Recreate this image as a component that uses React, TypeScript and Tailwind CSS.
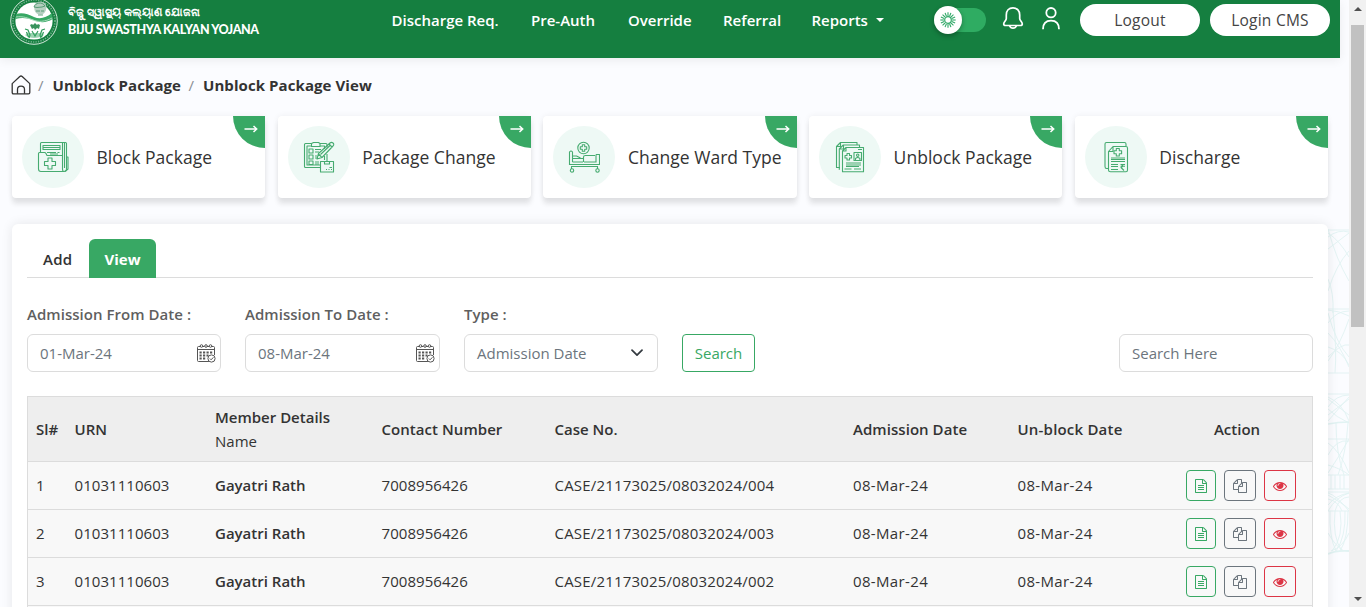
import React from "react";

function Logo() {
  return (
    <svg width="48" height="48" viewBox="0 0 48 48" className="shrink-0">
      <circle cx="24" cy="24" r="23.3" fill="none" stroke="#fff" strokeWidth="1" opacity=".8" />
      <circle cx="24" cy="24" r="21" fill="none" stroke="#fff" strokeWidth="1.6" strokeDasharray="1.2 1.3" opacity=".4" />
      <circle cx="24" cy="24" r="18.6" fill="#fff" />
      <path d="M24 9c1-5 10-6 12-1 1 3 0 7-3 9-4 1.500-8-.5-8.500-4z" fill="#b5cfc0" />
      <path d="M24 10c1-4 8-6 11-1l-3 1-5 .5zM26 14h4M31 14h3M28 18h5" stroke="#3f8f62" strokeWidth=".8" fill="none" />
      <path d="M6 17c6-2 12 0 18 3 6 2.500 12 1 18-4l.6 6c-6 4-13 4-19 1-6-2-12-3-18-1z" fill="#38a864" />
      <path d="M6 20c7-1 12 1 17 3s12 2 19-2" stroke="#a9dcbd" strokeWidth="1" fill="none" />
      <path d="M15 32l3 1 2 5-1 3M35 32l-3 1-2 5 1 3M16.500 35l2 5M33.500 35l-2 5M22 34l3 5 3-5" stroke="#2f9a5a" strokeWidth="1.200" fill="none" />
      <path d="M20 28l2 4 2-1 1 2 2-2 2 1 1-4-2-1-1 1-2-2-2 2-1-1z" fill="#15803f" opacity=".85" />
      <path d="M15 38c4 4 14 4 19 0l-3-2h-13z" fill="#38a864" opacity=".5" />
    </svg>
  );
}

function Sun() {
  const rays = Array.from({ length: 16 }, (_, i) => i * 22.5);
  return (
    <svg width="16" height="16" viewBox="0 0 16 16" fill="none" stroke="#2fa866" strokeWidth="1.1">
      <circle cx="8" cy="8" r="3.300" strokeWidth="1.200" />
      {rays.map((a) => (
        <path key={a} d="M8 3.900V.3" transform={`rotate(${a} 8 8)`} />
      ))}
    </svg>
  );
}

function Bell() {
  return (
    <svg width="22" height="24" viewBox="0 0 22 24" fill="none" stroke="#fff" strokeWidth="1.700" strokeLinejoin="round">
      <path d="M11 1.900c-4.200 0-6.700 3-6.700 7v3.600c0 2.100-2.600 3.500-2.600 5.500 0 1 .8 1.500 1.900 1.500h14.800c1.100 0 1.900-.5 1.900-1.500 0-2-2.600-3.400-2.600-5.500V8.900c0-4-2.500-7-6.700-7z" />
      <path d="M7.600 19.800c.6 1.600 1.800 2.400 3.400 2.400s2.800-.8 3.400-2.400" />
    </svg>
  );
}

function Person() {
  return (
    <svg width="18" height="24" viewBox="0 0 18 24" fill="none" stroke="#fff" strokeWidth="1.800">
      <circle cx="9" cy="6.700" r="4.700" />
      <path d="M1 23.200c0-5.700 3.200-8.600 8-8.600s8 2.900 8 8.600" />
    </svg>
  );
}

function Home() {
  return (
    <svg width="20" height="20" viewBox="0 0 20 20" fill="none" stroke="#333" strokeWidth="1.300" strokeLinejoin="round">
      <path d="M1.200 8.600 8.800 1.500q1.200-1 2.400 0l7.600 7.100v8.900q0 1.300-1.300 1.300h-15q-1.300 0-1.300-1.300z" />
      <path d="M6.500 18.700v-4.200c0-4.600 7-4.600 7 0v4.200" />
    </svg>
  );
}

function CalendarIcon() {
  return (
    <svg width="19" height="19" viewBox="0 0 19 19" fill="none" stroke="#555" strokeWidth="1">
      <path d="M12 17.500H1.500q-1 0-1-1V3.500q0-1 1-1h2M5.500 2.500h2M10 2.500h2M14.500 2.500h2q1 0 1 1V11M.5 5.500h17" />
      <circle cx="4.500" cy="2" r="1.300" />
      <circle cx="9" cy="2" r="1.300" />
      <circle cx="13.500" cy="2" r="1.300" />
      <path d="M2.500 8.500h2.200M6 8.500h2.200M9.500 8.500h2.200M13 8.500h2.200M2.500 11.500h2.200M6 11.500h2.200M9.500 11.500h2M2.500 14.500h2.200M6 14.500h2.200" strokeWidth="2" />
      <circle cx="14.500" cy="14.500" r="3.600" fill="#fff" />
      <path d="m12.800 14.500 1.300 1.300 2.300-2.500" />
    </svg>
  );
}

function FileText() {
  return (
    <svg width="12" height="14" viewBox="128 0 1536 1792" fill="currentColor">
      <path d="M1596 380q28 28 48 76t20 88v1152q0 40-28 68t-68 28h-1344q-40 0-68-28t-28-68v-1600q0-40 28-68t68-28h896q40 0 88 20t76 48zm-444-244v376h376q-10-29-22-41l-313-313q-12-12-41-22zm384 1528v-1024h-416q-40 0-68-28t-28-68v-416h-768v1536h1280zm-1024-864q0-14 9-23t23-9h704q14 0 23 9t9 23v64q0 14-9 23t-23 9h-704q-14 0-23-9t-9-23v-64zm736 224q14 0 23 9t9 23v64q0 14-9 23t-23 9h-704q-14 0-23-9t-9-23v-64q0-14 9-23t23-9h704zm0 256q14 0 23 9t9 23v64q0 14-9 23t-23 9h-704q-14 0-23-9t-9-23v-64q0-14 9-23t23-9h704z" />
    </svg>
  );
}

function Files() {
  return (
    <svg width="14" height="14" viewBox="0 0 1792 1792" fill="currentColor">
      <path d="M1696 384q40 0 68 28t28 68v1216q0 40-28 68t-68 28h-960q-40 0-68-28t-28-68v-288h-544q-40 0-68-28t-28-68v-672q0-40 20-88t48-76l408-408q28-28 76-48t88-20h416q40 0 68 28t28 68v328q68-40 128-40h416zm-544 213l-299 299h299v-299zm-640-384l-299 299h299v-299zm196 647l316-316v-416h-384v416q0 40-28 68t-68 28h-416v640h512v-256q0-40 20-88t48-76zm956 804v-1152h-384v416q0 40-28 68t-68 28h-416v640h896z" />
    </svg>
  );
}

function Eye() {
  return (
    <svg width="14" height="14" viewBox="0 0 1792 1792" fill="currentColor">
      <path d="M1664 960q-152-236-381-353 61 104 61 225 0 185-131.500 316.500t-316.500 131.500-316.500-131.500-131.500-316.500q0-121 61-225-229 117-381 353 133 205 333.500 326.500t434.500 121.500 434.500-121.500 333.500-326.500zm-720-384q0-20-14-34t-34-14q-125 0-214.500 89.500t-89.500 214.500q0 20 14 34t34 14 34-14 14-34q0-86 61-147t147-61q20 0 34-14t14-34zm848 384q0 34-20 69-140 230-376.500 368.500t-499.500 138.500-499.500-139-376.500-368q-20-35-20-69t20-69q140-229 376.500-368t499.500-139 499.500 139 376.500 368q20 35 20 69z" />
    </svg>
  );
}

function CardSvg({ children }: { children: React.ReactNode }) {
  return (
    <svg width="32" height="32" viewBox="0 0 32 32" fill="none" stroke="#46ab70" strokeWidth="1.100" strokeLinejoin="round">
      {children}
    </svg>
  );
}

const cards = [
  {
    label: "Block Package",
    icon: (
      <CardSvg>
        <path d="M3.500 11V2.500q0-1 1-1h24q1 0 1 1V28q0 2-1.500 2.500" />
        <path d="M25.500 2v26q0 2.500 1.500 2.500t4-2.500V16h-1.500M27.500 2v25" />
        <path d="M1.500 12.500q0-1 1-1h5q1 0 1.500 1l1 2h15.500M1.500 12.500V28q0 2.500 2.500 2.500h23.500" />
        <path d="M6 4.500h17v4H6zM6.500 6.500h16M10 11.500h9M20.500 11.500h2M13 13h8" />
        <path d="M11 17h4v3.500h3.500v4H15V28h-4v-3.500H7.500v-4H11z" />
      </CardSvg>
    ),
  },
  {
    label: "Package Change",
    icon: (
      <CardSvg>
        <path d="M18 26.500H2.500q-1 0-1-1v-22q0-1 1-1h6M17 2.500h6q1 0 1 1v3M24 13v7" />
        <path d="M18 24H4V5h4.500M17 5h4.500v3M21.500 15v4" />
        <path d="M8.500 5.500v-3l2-1h5l1.500 1v3z" />
        <path d="M6 8h4v4H6zM6 14h4v4H6zM6 20h4v3.500H6zM12 8.500h6M12 11h4M12 15h2M12 17h3M12 21h4M12 23h4" />
        <path d="m14 18 1.500-5.500L27 2q1.500-1.300 3 0t0 3L19 16.500zM26 3l3 3M15.500 13l3 3M17.500 13.500 27 4.500" />
        <path d="M17.500 20.500h13v10.500h-13zM21.500 20.500V23h5v-2.500M23 28.500h1M25.500 28.500h1M28 28.500h1M26.500 26.500H29" />
      </CardSvg>
    ),
  },
  {
    label: "Change Ward Type",
    icon: (
      <CardSvg>
        <circle cx="15.500" cy="7" r="5.700" />
        <path d="M14.300 3.800h2.400v2h2v2.400h-2v2h-2.400v-2h-2V5.800h2z" />
        <path d="M1.500 24V11q1.500-2 3 0v10M4.500 15h4l4 2M4.500 17.500h11M4.500 21H15M15.500 21v-5q0-1.500 2-1.500h9.500M28 13.500h3.500V24M28 13.500v8M16 21h12" />
        <path d="M1.500 23.500h30M3 25.500h27M3.500 25.500V28M29.500 25.500V28" />
        <circle cx="4" cy="29.500" r="1.700" />
        <circle cx="29.500" cy="29.500" r="1.700" />
      </CardSvg>
    ),
  },
  {
    label: "Unblock Package",
    icon: (
      <CardSvg>
        <path d="M6 26.500H2.500V5.500l4-4H23v3M2.500 5.500h4v-4M5.500 28.500H5.300V8l4-4H25.500v3M8.500 30.800V10l3.500-3.500h17.500v24.300zM5.500 8h4V4M8.500 10H12V6.500" />
        <path d="M13 12.500h2.500v2h2V17h-2v2H13v-2h-2v-2.500h2zM20 11.500h7.500v8H20z" />
        <circle cx="23.700" cy="14.200" r="1.200" />
        <path d="M21.500 19v-1.500q2.200-2 4.400 0V19M24 8.500h4M12 22h15M12 24h15M12 25.500h13M10.500 28h7M20 28h7" />
      </CardSvg>
    ),
  },
  {
    label: "Discharge",
    icon: (
      <CardSvg>
        <path d="M8 27.500H6.500q-1.500 0-1.500-2V3q0-1.500 1.500-1.500h18Q26 1.500 26 3v2" />
        <path d="M8.500 10.500 13 5.500h13q1.500 0 1.500 1.500v22q0 1.800-1.500 1.800H10.500q-2 0-2-1.800zM8.500 10.500H13v-5" />
        <path d="M16.300 7.500h3v2.300h2.300v3h-2.300V15h-3v-2.200H14v-3h2.300z" />
        <path d="M11 17h14M11 18.500h14M11 20.500h14M11 23.500h7M11 25.500h7M11 28.500h7M20.500 23.500h4.500M20.500 25.300h4.500M21 23.500q4 1.500 0 3l3 3" />
      </CardSvg>
    ),
  },
];

const nav = [
  { label: "Discharge Req.", cls: "w-[139.500px]" },
  { label: "Pre-Auth", cls: "w-[97px]" },
  { label: "Override", cls: "w-[95px]" },
  { label: "Referral", cls: "w-[88.500px]" },
];

const rows = [
  { sl: "1", no: "004" },
  { sl: "2", no: "003" },
  { sl: "3", no: "002" },
];

const COLS = "grid grid-cols-[38.500px_140.500px_166.500px_173px_298.500px_164.500px_auto]";

function Guilloche() {
  return (
    <svg width="21" height="326" viewBox="0 0 21 326" className="absolute left-[1328px] top-[229px]" fill="none" stroke="#7fd0c4" strokeWidth=".9" opacity=".2">
      <path d="M0 1h21M0 8Q10 0 21 3M0 20 21 4M0 0q8 30 21 52M0 62Q8 36 21 22M0 50q6 14 5 34M0 4q12 8 21 24" />
      <path d="M0 80h21M0 81q12 1 21 6M0 94q8-12 21-12M0 84q8 30 21 44M0 132q12-16 21-42M0 104q12 12 21 34M0 118q14 4 21 18M5 82q4 40 2 62M0 128q14-14 21-12M0 144h21" />
      <path d="M0 165h21M0 168q14 6 21 24M0 192q12-14 21-24M0 178q8-12 21-12M0 180q8 8 21 14M0 170l21 16M0 186l21-16" />
      <path d="M0 195q10-2 21-2" strokeWidth="1.400" />
      <path d="M0 210h21M0 214q12 8 21 30M0 244q12-18 21-34M8 194q0 30 8 52M0 226q8-16 21-14M0 236q14 4 21 10M20 194q-2 30-10 52" />
      <path d="M0 246h21M3 246v14M7 246v14M12 246v14M16 246v14M0 260h21M0 263h21" />
      <path d="M0 264q8 2 21 18M0 282q8-14 21-18M0 270q10 2 14 12M7 282q4-14 14-14M0 276q8-10 21-12M0 266q14 8 21 14M0 282h21" />
      <path d="M2 282q-1 26 6 40M7 282q-3 26 7 40M12 282q4 26-8 40M17 282q1 26-9 40M20 282q0 28-8 40M0 304q8 14 16 18M21 304q-6 14-18 18" />
      <path d="M0 325q8-4 21-3" strokeWidth="1.800" />
    </svg>
  );
}

function Field({ label, value, width, children }: { label: string; value: string; width: string; children: React.ReactNode }) {
  return (
    <div className={`${width} mr-6`}>
      <div className="h-6 whitespace-nowrap font-semibold leading-6 tracking-[0.04px] text-[#5f5f5f]">{label}</div>
      <div className="mt-2 flex h-[38px] items-center justify-between rounded-md border border-[#dcdcdc] bg-white pl-3 text-[#6c757d]">
        <span>{value}</span>
        {children}
      </div>
    </div>
  );
}

export default function App() {
  return (
    <div className="relative flex h-[607px] w-[1366px] overflow-hidden bg-[#fbfcff] font-['Open_Sans','Noto_Sans',sans-serif] text-[15px] leading-6 text-[#333]">
      <Guilloche />
      <div className="relative w-[1349px] shrink-0">
        <header className="flex h-[58px] w-[1340px] items-start bg-[#157f40] text-white shadow-[0_2px_10px_rgba(0,0,0,0.07)]">
          <div className="-mt-[3px] flex w-[391.500px] pl-[10px]">
            <Logo />
            <div className="ml-[10px] whitespace-nowrap pt-[6px]">
              <div className="h-[18px] text-[11.300px] font-semibold leading-[18px]">ବିଜୁ ସ୍ୱାସ୍ଥ୍ୟ କଲ୍ୟାଣ ଯୋଜନା</div>
              <div className="font-['Lato',sans-serif] text-[12.500px] font-black leading-[18px] tracking-[-0.400px]">BIJU SWASTHYA KALYAN YOJANA</div>
            </div>
          </div>
          <nav className="flex w-[542.500px] whitespace-nowrap pt-2 font-semibold">
            {nav.map((n) => (
              <a key={n.label} className={n.cls}>{n.label}</a>
            ))}
            <a className="flex items-center">
              <span className="w-[64px]">Reports</span>
              <span className="border-x-4 border-t-4 border-x-transparent border-t-white" />
            </a>
          </nav>
          <div className="mt-2 flex h-6 w-[52px] items-center rounded-full bg-[#2fac62]">
            <span className="flex size-[28px] items-center justify-center rounded-full bg-white shadow-[0_2px_5px_rgba(0,0,0,0.3)]">
              <Sun />
            </span>
          </div>
          <div className="ml-4 mt-[6px]"><Bell /></div>
          <div className="ml-[18px] mt-[6px]"><Person /></div>
          <button className="ml-5 mt-1 h-8 w-[120px] rounded-full bg-white text-[15.500px] font-medium tracking-[0.250px] text-[#444]">Logout</button>
          <button className="ml-[10px] mt-1 h-8 w-[120px] rounded-full bg-white text-[15.500px] font-medium tracking-[0.250px] text-[#444]">Login CMS</button>
        </header>

        <div className="flex h-[58px] items-center whitespace-nowrap pb-[4px] pl-[11px] font-bold tracking-[0.080px]">
          <Home />
          <span className="ml-[7px] w-[14.500px] font-normal text-[#8a8f94]">/</span>
          <span className="w-[136px]">Unblock Package</span>
          <span className="w-[14.500px] font-normal text-[#8a8f94]">/</span>
          <span>Unblock Package View</span>
        </div>

        <div className="ml-3 grid w-[1316px] grid-cols-5 gap-x-[12.500px]">
          {cards.map((c) => (
            <div key={c.label} className="relative flex h-[82px] items-center rounded bg-white pl-[10px] shadow-[0_6px_5px_rgba(0,0,0,0.09),0_0_6px_rgba(0,0,0,0.06)]">
              <div className="flex size-[62px] shrink-0 items-center justify-center rounded-full bg-[#eef9f5]">{c.icon}</div>
              <div className="ml-[12.500px] whitespace-nowrap text-[17.500px] font-medium tracking-[0.030px]">{c.label}</div>
              <div className="absolute right-0 top-0 flex size-8 items-start justify-end rounded-bl-full rounded-tr bg-[#38a864] pr-[7px] pt-[8px]">
                <svg width="14" height="10" viewBox="0 0 14 10" fill="none" stroke="#fff" strokeWidth="1.500">
                  <path d="M.5 5h12M9.500 2l3.200 3-3.200 3" />
                </svg>
              </div>
            </div>
          ))}
        </div>

        <main className="ml-3 mt-[26px] h-[420px] w-[1316px] rounded-md bg-white px-[15px] pt-[15px] shadow-[0_0_12px_rgba(0,0,0,0.09)]">
          <div className="flex h-[39px] border-b border-[#dcdcdc] font-semibold">
            <div className="w-[62px] pl-4 pt-2 tracking-[0.300px]">Add</div>
            <div className="h-[39px] w-[67px] rounded-t-md bg-[#38a864] pt-2 text-center font-bold text-white">View</div>
          </div>

          <div className="mt-6 flex items-end">
            <Field label="Admission From Date :" value="01-Mar-24" width="w-[194px]">
              <span className="mr-1"><CalendarIcon /></span>
            </Field>
            <Field label="Admission To Date :" value="08-Mar-24" width="w-[195px]">
              <span className="mr-1"><CalendarIcon /></span>
            </Field>
            <Field label="Type :" value="Admission Date" width="w-[194px]">
              <svg width="12" height="8" viewBox="0 0 12 8" fill="none" stroke="#343a40" strokeWidth="1.700" strokeLinecap="round" strokeLinejoin="round" className="mr-[14px]">
                <path d="m1 1.200 5 5 5-5" />
              </svg>
            </Field>
            <button className="h-[38px] w-[73px] rounded border border-[#38a864] text-[#38a864]">Search</button>
            <div className="ml-auto flex h-[38px] w-[194px] items-center rounded-md border border-[#dcdcdc] pl-3 text-[#6c757d]">Search Here</div>
          </div>

          <div className="mt-6 h-[220px] whitespace-nowrap border border-b-0 border-[#dcdcdc] bg-[#f8f8f8]">
            <div className={`${COLS} h-[65px] items-center border-b border-[#dcdcdc] bg-[#eee] pl-2 font-semibold`}>
              <div>Sl#</div>
              <div>URN</div>
              <div>
                <div>Member Details</div>
                <div className="font-normal">Name</div>
              </div>
              <div className="tracking-[0.050px]">Contact Number</div>
              <div>Case No.</div>
              <div className="tracking-[0.050px]">Admission Date</div>
              <div className="flex">
                <span className="w-[145px] tracking-[0.200px]">Un-block Date</span>
                <span className="w-[149px] text-center">Action</span>
              </div>
            </div>
            {rows.map((r) => (
              <div key={r.sl} className={`${COLS} h-12 items-center border-b border-[#dcdcdc] pl-2`}>
                <div className="pb-0.5">{r.sl}</div>
                <div className="pb-0.5 tracking-[0.050px]">01031110603</div>
                <div className="pb-0.5 font-semibold">Gayatri Rath</div>
                <div className="pb-0.5 tracking-[0.050px]">7008956426</div>
                <div className="pb-0.5 tracking-[0.180px]">CASE/21173025/08032024/{r.no}</div>
                <div className="pb-0.5 tracking-[0.350px]">08-Mar-24</div>
                <div className="flex items-center">
                  <span className="w-[168.500px] pb-0.5 tracking-[0.350px]">08-Mar-24</span>
                  <button className="mr-2 flex h-[31px] w-[30px] items-center justify-center rounded border border-[#38a864] text-[#38a864]"><FileText /></button>
                  <button className="mr-2 flex h-[31px] w-8 items-center justify-center rounded border border-[#6c757d] text-[#6c757d]"><Files /></button>
                  <button className="flex h-[31px] w-8 items-center justify-center rounded border border-[#dc3545] text-[#dc3545]"><Eye /></button>
                </div>
              </div>
            ))}
          </div>
        </main>
      </div>

      <div className="relative flex h-[607px] w-[17px] flex-col items-center justify-between bg-[#f1f1f1] pb-[6px] pt-[7px]">
        <span className="border-x-4 border-b-4 border-x-transparent border-b-[#505050]" />
        <span className="absolute left-[2px] top-[25px] h-[302px] w-[13px] bg-[#c1c1c1]" />
        <span className="border-x-4 border-t-4 border-x-transparent border-t-[#505050]" />
      </div>
    </div>
  );
}
